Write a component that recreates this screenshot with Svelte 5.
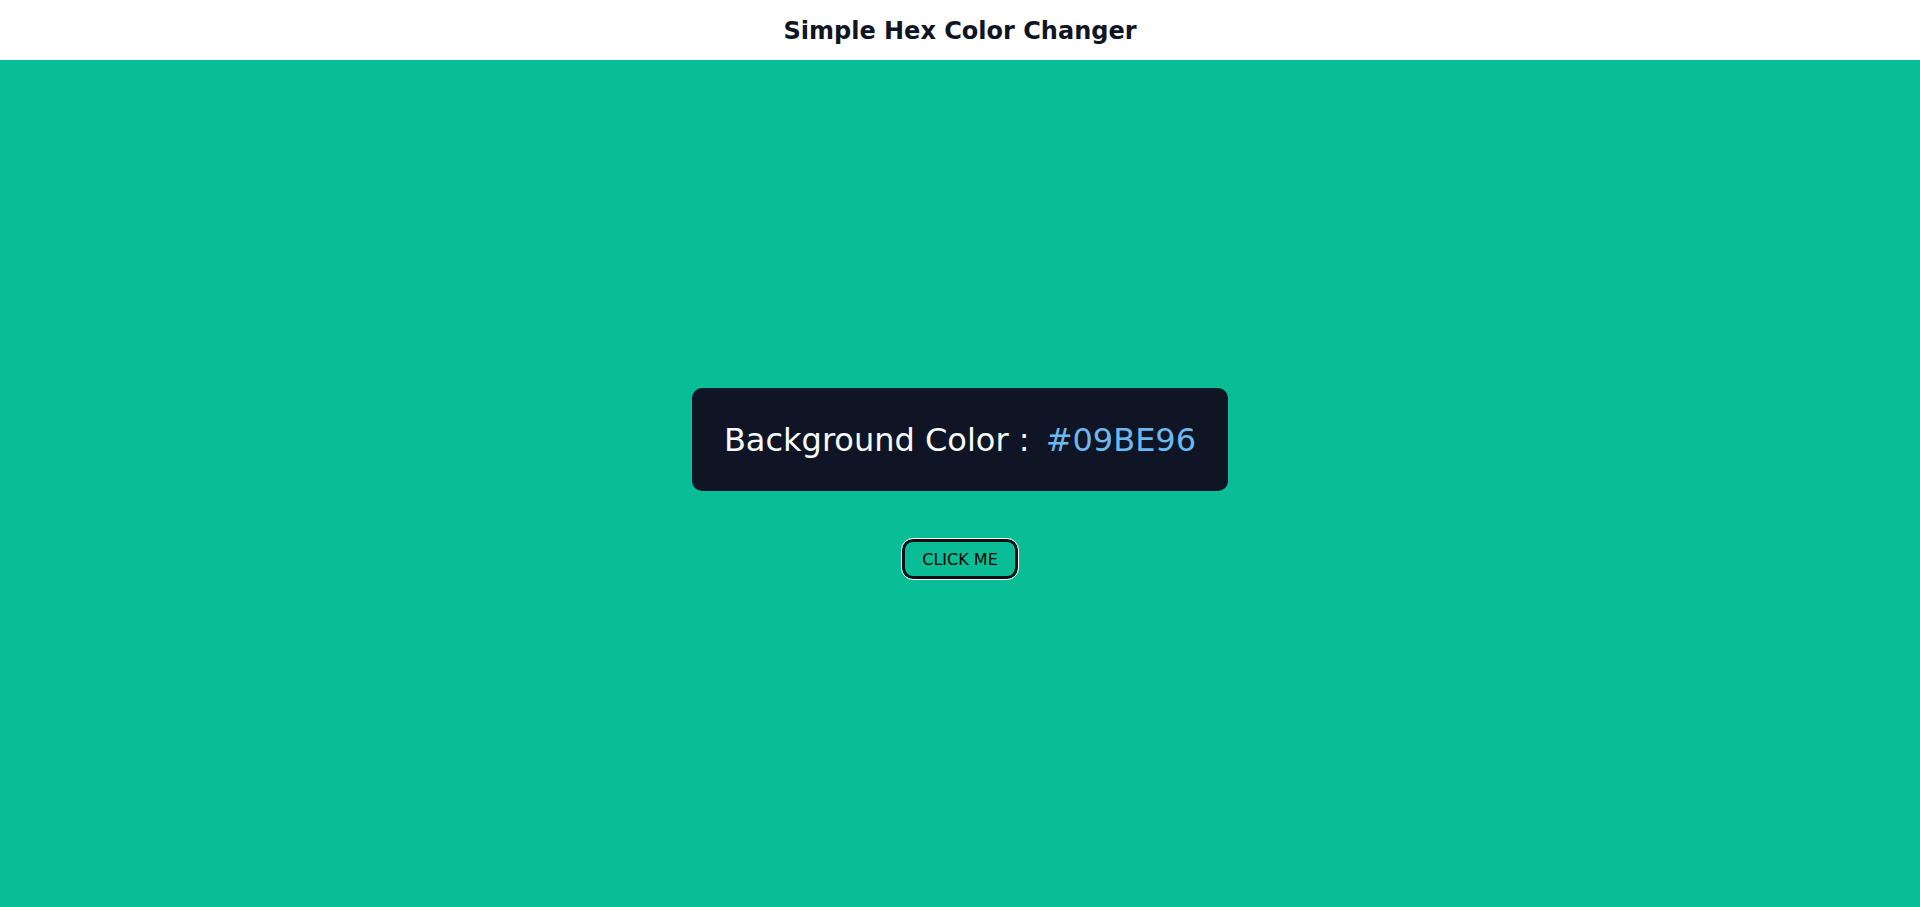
<script>
  import { onMount } from 'svelte';

  const digits = '0123456789ABCDEF';
  let color = $state('#09BE96');
  let button;

  function changeColor() {
    let next = '#';
    for (let i = 0; i < 6; i++) {
      next += digits[Math.floor(Math.random() * digits.length)];
    }
    color = next;
  }

  onMount(() => button.focus());
</script>

<div class="page" style:background-color={color}>
  <header>
    <h1>Simple Hex Color Changer</h1>
  </header>
  <main>
    <h2>Background Color : <span>{color}</span></h2>
    <button type="button" bind:this={button} onclick={changeColor}>CLICK ME</button>
  </main>
</div>

<style>
  :global(body) {
    margin: 0;
  }

  .page {
    display: flex;
    flex-direction: column;
    min-height: 100vh;
    font-family: Verdana, "DejaVu Sans", sans-serif;
    color: #0f1524;
  }

  header {
    padding: 16px 16px 14px;
    background: #fff;
    text-align: center;
  }

  h1 {
    margin: 0;
    font-size: 24px;
    line-height: 30px;
  }

  main {
    flex: 1;
    display: flex;
    flex-direction: column;
    align-items: center;
    justify-content: center;
    gap: 48px;
  }

  h2 {
    margin: 0;
    padding: 34px 32px 32px;
    border-radius: 10px;
    background: #0f1524;
    color: #f8fbfd;
    font-size: 32px;
    line-height: 37px;
    font-weight: 400;
  }

  span {
    margin-left: 6px;
    color: #6bb9f0;
  }

  button {
    padding: 8px 17px 6px;
    border: 3px solid #101014;
    border-radius: 11px;
    background: transparent;
    color: #000;
    font: inherit;
    font-size: 16px;
    line-height: 20px;
    cursor: pointer;
  }

  button:focus {
    outline: 1px solid #fff;
  }
</style>
